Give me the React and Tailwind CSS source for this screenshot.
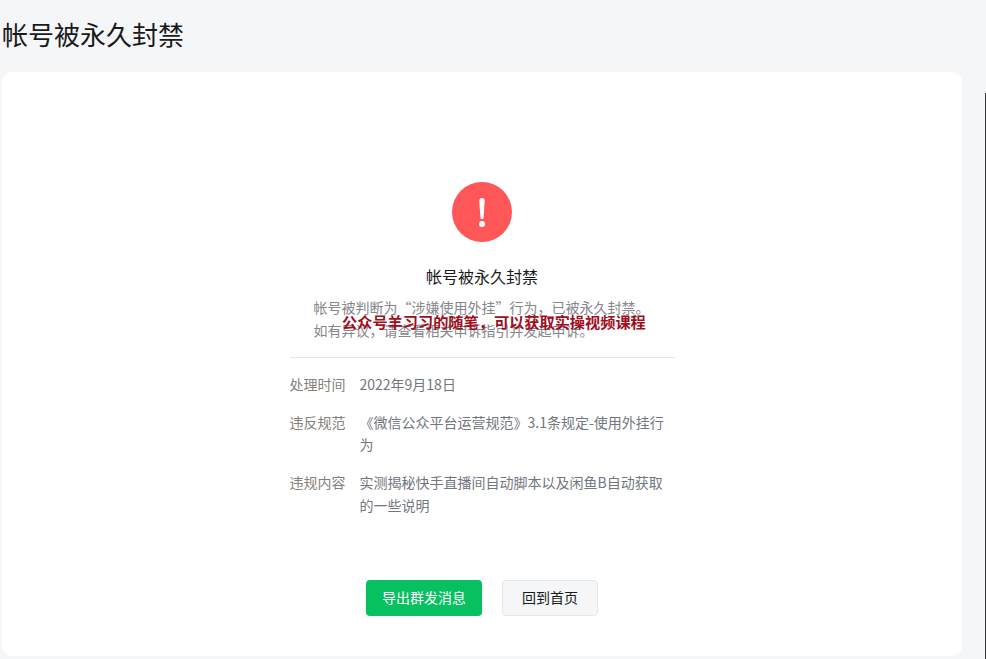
import React from "react";

const FONT = { fontFamily: '"Noto Sans CJK SC", "Liberation Sans", sans-serif' };

function Row({ label, children }) {
  return (
    <div className="flex items-start text-[14px] leading-[22.4px]">
      <div className="w-[70px] shrink-0 text-[#85807a]">{label}</div>
      <div className="w-[315px] text-[#72767f]">{children}</div>
    </div>
  );
}

export default function App() {
  return (
    <div className="relative flex h-[659px] w-[986px] overflow-hidden bg-[#f5f6f8]" style={FONT} lang="zh-CN">
      <div className="flex w-[985px] shrink-0 flex-col pl-[2px]">
        <h1 className="flex h-[72px] items-center pb-[5px] text-[26px] font-normal leading-none text-[#1a1a1a]">帐号被永久封禁</h1>
        <div className="flex h-[584px] w-[960px] flex-col items-center rounded-[10px] bg-white pt-[110px]">
          <div className="flex h-[60px] w-[60px] items-center justify-center rounded-full bg-[#ff5757]">
            <svg width="6" height="29" viewBox="0 0 6 29" aria-hidden="true">
              <path d="M.3 2.6C.3 1 1.3 0 3 0s2.700 1 2.700 2.600L4.600 19.500C4.500 20.500 3.900 21 3 21s-1.500-.5-1.600-1.500z" fill="#fff" />
              <circle cx="3" cy="26" r="3" fill="#fff" />
            </svg>
          </div>
          <div className="mt-[23px] text-[16px] leading-[22px] text-[#1a1a1a]">帐号被永久封禁</div>
          <div className="mt-[9px] w-[385px] border-b border-[#e7e7e7] pb-[15px] pl-[24px] text-[14px] leading-[23px] text-[#85878c]">
            <p>帐号被判断为“涉嫌使用外挂”行为，已被永久封禁。</p>
            <p>如有异议，请查看相关申诉指引并发起申诉。</p>
          </div>
          <div className="mt-[15px] flex w-[385px] flex-col gap-[15.6px]">
            <Row label="处理时间">2022年9月18日</Row>
            <Row label="违反规范">《微信公众平台运营规范》3.1条规定-使用外挂行为</Row>
            <Row label="违规内容">实测揭秘快手直播间自动脚本以及闲鱼B自动获取的一些说明</Row>
          </div>
          <div className="mt-[64px] flex gap-[20px]">
            <button className="h-[36px] w-[116px] rounded-[4px] bg-[#07c160] pb-[2px] text-[14px] font-normal text-white">导出群发消息</button>
            <button className="h-[36px] w-[96px] rounded-[4px] border border-[#e4e6e9] bg-[#f5f6f8] pb-[2px] text-[14px] text-[#1a1a1a]">回到首页</button>
          </div>
        </div>
      </div>
      <div className="mt-[93px] h-[566px] w-[1px] bg-[#33363b]" />
      <div className="absolute left-[342px] top-[311px] whitespace-nowrap text-[15.2px] font-bold leading-[20px] text-[#a00d1c]">公众号羊习习的随笔，可以获取实操视频课程</div>
    </div>
  );
}
